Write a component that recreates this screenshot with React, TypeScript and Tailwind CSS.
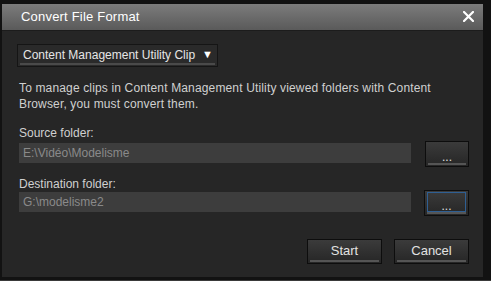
import React from "react";

const font = { fontFamily: '"Liberation Sans", Arial, sans-serif' };

function DarkButton({ label, w, focused }: { label: string; w: string; focused?: boolean }) {
  return (
    <div
      className={`relative ${w} h-[26px] border border-[#0d0d0d] bg-gradient-to-b from-[#3b3b3b] to-[#262626] flex items-center justify-center text-[12px] text-[#e0e0e0]`}
    >
      <span className="leading-none pt-[6px]">{label}</span>
      {focused && <div className="absolute left-[2px] right-[2px] top-[1px] bottom-[3px] border border-[#2f5f93]" />}
      <div className="absolute left-[2px] right-[2px] bottom-[1px] h-[2px] bg-[#555555]" />
    </div>
  );
}

function ActionButton({ label }: { label: string }) {
  return (
    <div className="relative w-[75px] h-[25px] border border-[#0d0d0d] bg-gradient-to-b from-[#3b3b3b] to-[#262626] flex items-center justify-center text-[13px] text-[#e2e2e2]">
      <span className="leading-none -mt-[2px]">{label}</span>
      <div className="absolute left-[2px] right-[2px] bottom-[1px] h-[2px] bg-[#555555]" />
    </div>
  );
}

export default function App() {
  return (
    <div className="w-[491px] h-[281px] bg-[#121212] overflow-hidden flex flex-col" style={font}>
      <div className="ml-[2px] mt-[4px] w-[481px] h-[273px] bg-[#262626] flex flex-col">
        <div className="h-[26px] bg-gradient-to-b from-[#7c7c7c] to-[#5a5a5a] flex items-center pl-[19px] pr-[9px]">
          <span className="text-[13px] text-white tracking-[0.2px] flex-1 -mt-[1px]">Convert File Format</span>
          <svg width="11" height="11" viewBox="0 0 11 11" className="-mt-[1px]">
            <path d="M1 1 L10 10 M10 1 L1 10" stroke="#ffffff" strokeWidth="2.2" strokeLinecap="square" />
          </svg>
        </div>
        <div className="h-[1px] bg-[#1c1c1c]" />
        <div className="flex flex-col pl-[17px] pr-[14px]">
          <div className="ml-[-2px] mt-[13px] w-[201px] h-[23px] border border-[#151515] bg-[#2a2a2a] relative flex items-center pl-[5px]">
            <span className="text-[12px] text-[#e6e6e6] leading-none -mt-[2px]">Content Management Utility Clip</span>
            <span className="text-[11px] text-white leading-none ml-[7px] -mt-[2px]">▼</span>
            <div className="absolute left-[2px] right-[2px] bottom-[1px] h-[2px] bg-[#4a4a4a]" />
          </div>
          <p className="mt-[13px] text-[12px] leading-[16px] text-[#d0d0d0] w-[440px] tracking-[0.15px]">
            To manage clips in Content Management Utility viewed folders with Content Browser, you must convert them.
          </p>
          <div className="mt-[13px] text-[12px] leading-[16px] text-[#d0d0d0]">Source folder:</div>
          <div className="mt-[2px] flex items-start gap-[14px]">
            <div className="w-[392px] h-[20px] bg-[#3d3d3d] flex items-center pl-[4px] text-[12px] text-[#8a8a8a]">
              E:\Vidéo\Modelisme
            </div>
            <div className="-mt-[2px]">
              <DarkButton label="..." w="w-[44px]" />
            </div>
          </div>
          <div className="mt-[9px] text-[12px] leading-[16px] text-[#d0d0d0]">Destination folder:</div>
          <div className="flex items-start gap-[13px]">
            <div className="w-[392px] h-[20px] bg-[#3d3d3d] flex items-center pl-[4px] text-[12px] text-[#8a8a8a]">
              G:\modelisme2
            </div>
            <div className="-mt-[2px]">
              <DarkButton label="..." w="w-[45px]" focused />
            </div>
          </div>
          <div className="mt-[23px] flex justify-end gap-[12px]">
            <ActionButton label="Start" />
            <ActionButton label="Cancel" />
          </div>
        </div>
      </div>
      <div className="mt-auto h-[1px] bg-[#3a3a3a]" />
    </div>
  );
}
